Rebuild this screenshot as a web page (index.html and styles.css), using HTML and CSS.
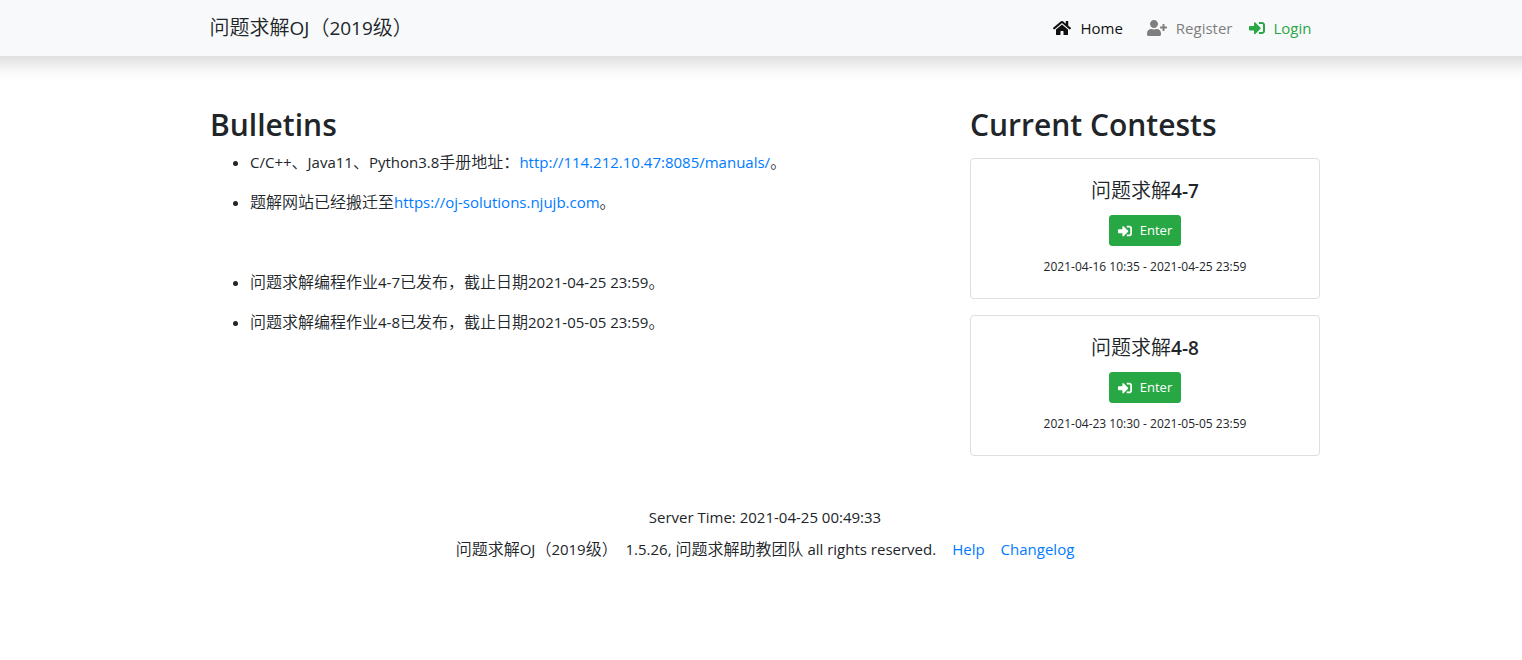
FILE: index.html
```html
<!DOCTYPE html>
<html lang="zh-CN">
<head>
<meta charset="utf-8">
<meta name="viewport" content="width=device-width, initial-scale=1">
<title>问题求解OJ（2019级）</title>
<link rel="stylesheet" href="styles.css">
</head>
<body>
<svg class="sprite" aria-hidden="true">
  <symbol id="icon-home" viewBox="0 0 576 512"><path d="M280.37 148.26L96 300.11V464a16 16 0 0 0 16 16l112.06-.29a16 16 0 0 0 15.92-16V368a16 16 0 0 1 16-16h64a16 16 0 0 1 16 16v95.64a16 16 0 0 0 16 16.05L464 480a16 16 0 0 0 16-16V300L295.67 148.26a12.19 12.19 0 0 0-15.3 0zM571.6 251.47L488 182.56V44.05a12 12 0 0 0-12-12h-56a12 12 0 0 0-12 12v72.61L318.47 43a48 48 0 0 0-61 0L4.34 251.47a12 12 0 0 0-1.6 16.9l25.5 31A12 12 0 0 0 45.15 301l235.22-193.74a12.19 12.19 0 0 1 15.3 0L530.9 301a12 12 0 0 0 16.9-1.6l25.5-31a12 12 0 0 0-1.7-16.93z"/></symbol>
  <symbol id="icon-user-plus" viewBox="0 0 640 512"><path d="M624 208h-64v-64c0-8.8-7.2-16-16-16h-32c-8.800 0-16 7.200-16 16v64h-64c-8.800 0-16 7.200-16 16v32c0 8.800 7.200 16 16 16h64v64c0 8.800 7.200 16 16 16h32c8.800 0 16-7.200 16-16v-64h64c8.800 0 16-7.200 16-16v-32c0-8.800-7.200-16-16-16zm-400 48c70.700 0 128-57.300 128-128S294.700 0 224 0 96 57.300 96 128s57.300 128 128 128zm89.600 32h-16.700c-22.200 10.200-46.900 16-72.900 16s-50.600-5.800-72.900-16h-16.700C60.200 288 0 348.200 0 422.400V464c0 26.500 21.500 48 48 48h352c26.500 0 48-21.500 48-48v-41.600c0-74.200-60.200-134.400-134.400-134.400z"/></symbol>
  <symbol id="icon-sign-in" viewBox="0 0 512 512"><path d="M416 448h-84c-6.600 0-12-5.400-12-12v-40c0-6.600 5.400-12 12-12h84c17.700 0 32-14.300 32-32V160c0-17.700-14.300-32-32-32h-84c-6.600 0-12-5.400-12-12V76c0-6.600 5.400-12 12-12h84c53 0 96 43 96 96v192c0 53-43 96-96 96zm-47-201L201 79c-15-15-41-4.500-41 17v96H24c-13.300 0-24 10.700-24 24v96c0 13.300 10.700 24 24 24h136v96c0 21.500 26 32 41 17l168-168c9.300-9.400 9.300-24.600 0-34z"/></symbol>
</svg>
<header class="navbar">
  <nav class="container navbar-row">
    <a class="brand" href="#"><span class="zh-lg">问题求解</span>OJ<span class="zh-lg">（</span>2019<span class="zh-lg">级）</span></a>
    <div class="nav-links">
      <a class="nav-link home" href="#"><svg class="icon icon-wide"><use href="#icon-home"/></svg><span>Home</span></a>
      <a class="nav-link register" href="#"><svg class="icon icon-wider"><use href="#icon-user-plus"/></svg><span>Register</span></a>
      <a class="nav-link login" href="#"><svg class="icon"><use href="#icon-sign-in"/></svg><span>Login</span></a>
    </div>
  </nav>
</header>
<div class="page">
  <main class="container content">
    <section class="bulletins">
      <h2>Bulletins</h2>
      <ul>
        <li>C/C++<span class="zh">、</span>Java11<span class="zh">、</span>Python3.8<span class="zh">手册地址：</span><a href="#">http://114.212.10.47:8085/manuals/</a><span class="zh">。</span></li>
        <li><span class="zh">题解网站已经搬迁至</span><a href="#">https://oj-solutions.njujb.com</a><span class="zh">。</span></li>
      </ul>
      <ul class="homework">
        <li><span class="zh">问题求解编程作业</span>4-7<span class="zh">已发布，截止日期</span>2021-04-25 23:59<span class="zh">。</span></li>
        <li><span class="zh">问题求解编程作业</span>4-8<span class="zh">已发布，截止日期</span>2021-05-05 23:59<span class="zh">。</span></li>
      </ul>
    </section>
    <section class="contests">
      <h2>Current Contests</h2>
      <article class="card">
        <h5><span class="zh-lg">问题求解</span>4-7</h5>
        <button class="enter" type="button"><svg class="icon"><use href="#icon-sign-in"/></svg><span>Enter</span></button>
        <p class="period">2021-04-16 10:35 - 2021-04-25 23:59</p>
      </article>
      <article class="card">
        <h5><span class="zh-lg">问题求解</span>4-8</h5>
        <button class="enter" type="button"><svg class="icon"><use href="#icon-sign-in"/></svg><span>Enter</span></button>
        <p class="period">2021-04-23 10:30 - 2021-05-05 23:59</p>
      </article>
    </section>
  </main>
  <footer class="footer">
    <p>Server Time: 2021-04-25 00:49:33</p>
    <div class="footer-row">
      <span><span class="zh">问题求解</span>OJ<span class="zh">（</span>2019<span class="zh">级）</span>&nbsp; 1.5.26, <span class="zh">问题求解助教团队</span> all rights reserved.</span>
      <a href="#">Help</a>
      <a href="#">Changelog</a>
    </div>
  </footer>
</div>
</body>
</html>
```

FILE: styles.css
```css
* { box-sizing: border-box; }
body {
  margin: 0;
  overflow-x: clip;
  font: 15px/24px "Open Sans", "Noto Sans CJK SC", sans-serif;
  color: #212529;
  background: #fff;
}
a { color: #007bff; text-decoration: none; }
h2, h5, p, ul { margin: 0; }
.sprite { position: absolute; width: 0; height: 0; }
.icon { width: 16px; height: 16px; fill: currentColor; flex: none; }
.icon-wide { width: 18px; }
.icon-wider { width: 20px; }
.zh { font: 350 16px/16px "Noto Sans CJK SC", sans-serif; }
.zh-lg { font: 350 20px/20px "Noto Sans CJK SC", sans-serif; }
.container { max-width: 1140px; margin: 0 auto; padding: 0 15px; }
.page { padding-left: 8px; }
/* runs past both window edges so that the shadow stays even */
.navbar {
  margin: 0 -24px;
  padding: 0 24px 0 31px;
  background: #f8f9fa;
  box-shadow: 0 8px 16px rgba(0, 0, 0, .15);
}
.navbar-row { display: flex; align-items: center; justify-content: space-between; height: 56px; }
.brand { font-size: 19px; line-height: 32px; font-weight: 400; color: #212529; }
.nav-links { display: flex; }
.nav-link { display: flex; align-items: center; gap: 9px; padding: 8px; }
.home { color: #111; margin-right: 8px; }
.register { color: #7f7f7f; }
.login { color: #28a745; }
.content { display: flex; gap: 30px; padding-top: 50px; }
.bulletins { flex: 1; }
.contests { width: 350px; }
h2 { font-size: 30px; line-height: 38px; font-weight: 600; margin-bottom: 6px; }
.contests h2 { margin-bottom: 14px; }
ul { padding-left: 40px; }
li { margin-bottom: 16px; }
.homework { margin-top: 56px; }
.card { border: 1px solid #dfdfdf; border-radius: 4px; padding: 20px; margin-bottom: 16px; text-align: center; }
h5 { font-size: 19px; line-height: 24px; font-weight: 600; margin-bottom: 12px; }
.enter {
  display: flex; align-items: center; gap: 8px; height: 31px; padding: 4px 8px; margin: 0 auto;
  border: 1px solid #28a745; border-radius: 3px; background: #28a745; color: #fff;
  font: 13px/21px "Open Sans", sans-serif; cursor: pointer;
}
.enter .icon { width: 14px; height: 14px; }
.period { font-size: 12px; margin-top: 9px; margin-bottom: -1px; }
.footer { text-align: center; padding: 33px 15px; }
.footer-row { display: flex; justify-content: center; gap: 16px; margin-top: 8px; }
```
